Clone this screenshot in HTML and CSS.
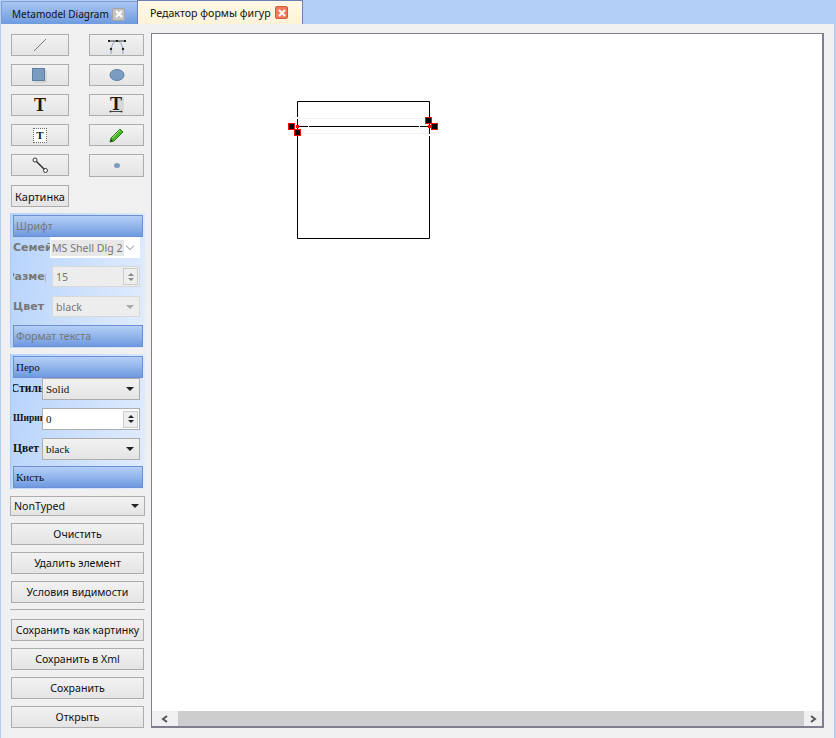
FILE: index.html

```html
<!DOCTYPE html>
<html lang="en">
<head>
    <meta charset="UTF-8">
    <title>Редактор формы фигур</title>
    <link rel="stylesheet" href="styles.css">
</head>
<body>
    <div class="tabbar">
        <div class="tab">
            <span class="tab-latin">Metamodel Diagram</span>
            <span class="tab-close">
                <svg width="8" height="8" viewBox="0 0 8 8"><path d="M1 1L7 7M7 1L1 7" stroke="#fff" stroke-width="2"/></svg>
            </span>
        </div>
        <div class="tab tab-active">
            <span>Редактор формы фигур</span>
            <span class="tab-close">
                <svg width="8" height="8" viewBox="0 0 8 8"><path d="M1 1L7 7M7 1L1 7" stroke="#fff" stroke-width="2"/></svg>
            </span>
        </div>
    </div>

    <div class="main">
        <div class="sidebar">
            <div class="tools">
                <button class="btn">
                    <svg width="16" height="16" viewBox="0 0 16 16"><path d="M2 14L14 2" stroke="#777" stroke-width="1"/></svg>
                </button>
                <button class="btn">
                    <svg width="20" height="18" viewBox="0 0 20 18"><path d="M4 18C4 8 7 5 10 5s6 3 6 13" fill="none" stroke="#8aa0b8"/><path d="M2 5H18" stroke="#333"/><rect x="1" y="4" width="2" height="2" fill="#222"/><rect x="9" y="4" width="2" height="2" fill="#222"/><rect x="17" y="4" width="2" height="2" fill="#222"/><circle cx="4" cy="13" r="1.2" fill="#222"/><circle cx="16" cy="13" r="1.2" fill="#222"/></svg>
                </button>
                <button class="btn">
                    <svg width="16" height="16" viewBox="0 0 16 16"><rect x="0.500" y="1.500" width="12" height="12" fill="#7a9cc0" stroke="#5f7f9f"/><path d="M14 3V15H2" fill="none" stroke="#c4c4c4"/></svg>
                </button>
                <button class="btn">
                    <svg width="16" height="14" viewBox="0 0 16 14"><ellipse cx="8" cy="7" rx="7" ry="5.500" fill="#7d9cc2" stroke="#60809f"/></svg>
                </button>
                <button class="btn">
                    <span class="glyph-t">T</span>
                </button>
                <button class="btn">
                    <svg width="16" height="18" viewBox="0 0 16 18"><rect x="8" y="1" width="7" height="13" fill="#d8d8d8"/><path d="M1 15.500H13" stroke="#444"/><circle cx="1.500" cy="15.500" r="1" fill="#333"/><circle cx="12.500" cy="15.500" r="1" fill="#333"/></svg>
                    <span class="glyph-t glyph-over">T</span>
                </button>
                <button class="btn">
                    <span class="text-box"><span class="glyph-small">T</span></span>
                </button>
                <button class="btn">
                    <svg width="16" height="16" viewBox="0 0 16 16"><path d="M1 15L2 11L11 2L14 5L5 14Z" fill="#4cb82c" stroke="#2a7a1a"/><path d="M1 15L2 12L4 14Z" fill="#333"/><path d="M3 11L11 3" stroke="#a5e58a"/></svg>
                </button>
                <button class="btn">
                    <svg width="16" height="16" viewBox="0 0 16 16"><path d="M3 3L13 13" stroke="#333" stroke-width="1.500"/><circle cx="3" cy="3" r="2" fill="#fff" stroke="#333"/><circle cx="13.500" cy="13.500" r="2" fill="#fff" stroke="#333"/></svg>
                </button>
                <button class="btn btn-tall">
                    <svg width="6" height="5" viewBox="0 0 6 5"><ellipse cx="3" cy="2.500" rx="3" ry="2.500" fill="#7d9cc2"/></svg>
                </button>
            </div>

            <button class="btn btn-picture">Картинка</button>

            <div class="group group-font">
                <div class="group-head">Шрифт</div>
                <div class="row row-first">
                    <span class="label">Семейство</span>
                    <div class="combo combo-white"><span class="combo-value">MS Shell Dlg 2</span><span class="chevron"></span></div>
                </div>
                <div class="row">
                    <span class="label label-center label-narrow">Размер</span>
                    <div class="spin spin-off"><span class="spin-value">15</span><span class="spin-arrows"><i class="up"></i><i class="down"></i></span></div>
                </div>
                <div class="row row-wide-gap">
                    <span class="label">Цвет</span>
                    <div class="combo"><span class="combo-value">black</span><span class="caret"></span></div>
                </div>
                <div class="group-head">Формат текста</div>
            </div>

            <div class="group group-pen">
                <div class="group-head">Перо</div>
                <div class="row row-first">
                    <span class="label label-center">Стиль</span>
                    <div class="combo"><span class="combo-value">Solid</span><span class="caret"></span></div>
                </div>
                <div class="row">
                    <span class="label label-small">Ширина</span>
                    <div class="spin"><span class="spin-value">0</span><span class="spin-arrows"><i class="up"></i><i class="down"></i></span></div>
                </div>
                <div class="row">
                    <span class="label">Цвет</span>
                    <div class="combo"><span class="combo-value">black</span><span class="caret"></span></div>
                </div>
                <div class="group-head">Кисть</div>
            </div>

            <div class="combo combo-type"><span class="combo-value">NonTyped</span><span class="caret"></span></div>

            <div class="actions">
                <button class="btn">Очистить</button>
                <button class="btn">Удалить элемент</button>
                <button class="btn">Условия видимости</button>
            </div>
            <div class="separator"></div>
            <div class="actions">
                <button class="btn">Сохранить как картинку</button>
                <button class="btn">Сохранить в Xml</button>
                <button class="btn">Сохранить</button>
                <button class="btn">Открыть</button>
            </div>
        </div>

        <div class="canvas">
            <div class="scene">
                <svg class="figure" width="160" height="150" viewBox="280 90 160 150">
                    <circle cx="297" cy="126" r="9" fill="none" stroke="#f2f2f2"/>
                    <circle cx="429" cy="126" r="9" fill="none" stroke="#f2f2f2"/>
                    <path d="M297 118.500H429M297 133.500H429" stroke="#f2f2f2"/>
                    <path d="M297.500 101.500H429.500V238.500H297.500Z" fill="none" stroke="#000"/>
                    <path d="M297 126.500H429" stroke="#000"/>
                    <path d="M297.500 117V119M429.500 117V119M297.500 134V136M429.500 134V136M308 126.500H309M419 126.500H420" stroke="#fff"/>
                    <rect x="296" y="125" width="3" height="3" fill="#f00"/>
                    <rect x="428" y="125" width="3" height="3" fill="#f00"/>
                    <g fill="#000" stroke="#f00">
                        <rect x="288.500" y="123.500" width="6" height="6"/>
                        <rect x="294.500" y="129.500" width="6" height="6"/>
                        <rect x="425.500" y="117.500" width="6" height="6"/>
                        <rect x="431.500" y="123.500" width="6" height="6"/>
                    </g>
                </svg>
            </div>
            <div class="scrollbar">
                <span class="scroll-arrow">
                    <svg width="8" height="8" viewBox="0 0 8 8"><path d="M6 1L2 4L6 7" fill="none" stroke="#555" stroke-width="2"/></svg>
                </span>
                <span class="scroll-thumb"></span>
                <span class="scroll-arrow scroll-arrow-right">
                    <svg width="8" height="8" viewBox="0 0 8 8"><path d="M2 1L6 4L2 7" fill="none" stroke="#555" stroke-width="2"/></svg>
                </span>
            </div>
        </div>
    </div>
</body>
</html>
```

FILE: styles.css

```css
* {
    box-sizing: border-box;
}
html, body {
    margin: 0;
    padding: 0;
    height: 738px;
    overflow: hidden;
}
body {
    width: 836px;
    background-color: #b4cff7;
    font-family: "Noto Sans", sans-serif;
    font-size: 10.6px;
    color: #111;
    display: flex;
    flex-direction: column;
}

/* tabs */
.tabbar {
    height: 24px;
    display: flex;
    align-items: flex-end;
    white-space: nowrap;
}
.tab {
    width: 136px;
    height: 23px;
    margin-left: 1px;
    padding: 2px 12px 0 10px;
    display: flex;
    align-items: center;
    justify-content: space-between;
    background: linear-gradient(#a9c6f2, #6e9be0);
    border-top: 1px solid #7f9bd0;
    border-left: 1px solid #7f9bd0;
    border-radius: 2px 0 0 0;
}
.tab-latin {
    font-size: 10px;
}
.tab-active {
    width: 166px;
    height: 24px;
    margin-left: 0;
    padding: 0 14px 0 12px;
    background: linear-gradient(#fff8e6, #fdf3d8);
    border: 1px solid #6c7fae;
    border-width: 1px 1px 0 1px;
    border-radius: 0;
}
.tab-close {
    width: 13px;
    height: 13px;
    display: flex;
    align-items: center;
    justify-content: center;
    background-color: #c4c4c4;
    border: 1px solid #a5a5a5;
    border-radius: 2px;
}
.tab-active .tab-close {
    background-color: #f07c5c;
    border-color: #d4573a;
}

/* main area */
.main {
    flex: 1;
    margin: 0 2px 0 1px;
    padding: 9px 10px 10px 9px;
    display: flex;
    gap: 7px;
    background-color: #f0f0f0;
    overflow: hidden;
}
.sidebar {
    width: 134px;
    flex: none;
    padding-top: 1px;
    display: flex;
    flex-direction: column;
}
.btn {
    height: 22px;
    padding: 0;
    display: flex;
    align-items: center;
    justify-content: center;
    position: relative;
    font-family: inherit;
    font-size: inherit;
    color: #111;
    white-space: nowrap;
    background: linear-gradient(#f2f2f2, #e4e4e4);
    border: 1px solid #adadad;
}
.tools {
    margin-left: 1px;
    display: grid;
    grid-template-columns: 58px 55px;
    column-gap: 20px;
    row-gap: 8px;
}
.btn-tall {
    height: 23px;
}
.btn-picture {
    width: 58px;
    margin: 8px 0 0 1px;
    font-size: 11px;
}
.glyph-t {
    font-family: "Liberation Serif", serif;
    font-weight: bold;
    font-size: 18px;
    line-height: 1;
    color: #1a1a10;
}
.glyph-over {
    position: absolute;
    left: 20px;
    top: 0;
}
.text-box {
    width: 14px;
    height: 15px;
    display: flex;
    align-items: center;
    justify-content: center;
    background-color: #fff;
    border: 1px dotted #666;
}
.glyph-small {
    font-family: "Liberation Serif", serif;
    font-weight: bold;
    font-size: 11px;
}

/* grouped panels */
.group {
    width: 135px;
    margin-top: 6px;
    padding: 2px 2px 1px;
    display: flex;
    flex-direction: column;
    background: linear-gradient(100deg, #b6d3fb, #e2edfd);
    border-left: 1px solid #a9c9f7;
}
.group-font {
    color: #777;
}
.group-pen {
    font-family: "Liberation Serif", serif;
    font-size: 11px;
}
.group-head {
    height: 22px;
    padding-left: 2px;
    display: flex;
    align-items: center;
    background: linear-gradient(#b5d0f6, #6f9ae0);
    border: 1px solid #6d8fd8;
}
.row {
    height: 21px;
    margin-top: 8px;
    display: flex;
    align-items: center;
    justify-content: flex-end;
    padding-right: 3px;
}
.group-pen .row {
    height: 22px;
}
.row-first {
    margin-top: 0;
}
.row-wide-gap {
    margin-top: 9px;
}
.row + .group-head {
    margin-top: 8px;
}
.group-pen .row + .group-head {
    margin-top: 6px;
}
.label {
    flex: 1;
    min-width: 0;
    display: flex;
    font-weight: bold;
    overflow: hidden;
    white-space: nowrap;
}
.group-font .label {
    font-family: "DejaVu Sans", sans-serif;
    font-size: 11px;
}
.group-pen .label {
    font-size: 11.5px;
    margin-top: -2px;
}
.group-pen .label-small {
    font-size: 9.5px;
}
.label-center {
    justify-content: center;
}
.label-narrow {
    margin-right: 6px;
}
.group-font .row .combo,
.group-font .row .spin {
    width: 88px;
    flex: none;
}
.group-font .row-first .combo {
    width: 90px;
}
.group-pen .row .combo,
.group-pen .row .spin {
    width: 98px;
    height: 22px;
    flex: none;
}
.combo, .spin {
    height: 21px;
    padding-left: 2px;
    display: flex;
    align-items: center;
    justify-content: space-between;
    background: linear-gradient(#f2f2f2, #e4e4e4);
    border: 1px solid #adadad;
}
.group-font .combo, .group-font .spin {
    background: #ededed;
    border-color: #d8d8d8;
}
.group-font .combo-white {
    background: #fff;
    border-color: #fff;
    padding-left: 0;
}
.combo-white .combo-value {
    background-color: #e8e8e8;
    padding: 1px;
    height: 16px;
    line-height: 14px;
}
.combo-value, .spin-value {
    padding-left: 1px;
}
.spin {
    background: #fff;
}
.group-font .spin-value,
.group-font .combo-value {
    color: #777;
}
.caret {
    margin-right: 5px;
    border-left: 4px solid transparent;
    border-right: 4px solid transparent;
    border-top: 4px solid #222;
}
.group-font .caret {
    border-top-color: #aaa;
}
.chevron {
    width: 6px;
    height: 6px;
    margin: 0 6px 3px 0;
    border-right: 1px solid #aaa;
    border-bottom: 1px solid #aaa;
    transform: rotate(45deg);
}
.spin-arrows {
    width: 15px;
    height: 17px;
    margin-right: 1px;
    display: flex;
    flex-direction: column;
    align-items: center;
    justify-content: center;
    gap: 2px;
    background-color: #eee;
    border: 1px solid #ccc;
}
.spin-arrows i {
    border-left: 3px solid transparent;
    border-right: 3px solid transparent;
}
.spin-arrows .up {
    border-bottom: 3px solid #222;
}
.spin-arrows .down {
    border-top: 3px solid #222;
}
.spin-off .spin-arrows i {
    border-top-color: #888;
    border-bottom-color: #888;
}
.combo-type {
    width: 135px;
    height: 20px;
    margin-top: 7px;
    padding-left: 2px;
}
.actions {
    margin-left: 1px;
    width: 133px;
    display: flex;
    flex-direction: column;
    gap: 7px;
}
.combo-type + .actions {
    margin-top: 7px;
}
.separator {
    width: 135px;
    height: 1px;
    margin: 6px 0 9px;
    background-color: #adadad;
}

/* canvas */
.canvas {
    width: 673px;
    flex: none;
    display: flex;
    flex-direction: column;
    background-color: #fff;
    border: 1px solid #7f7f8f;
    border-width: 1px 2px 2px 1px;
}
.scene {
    flex: 1;
    position: relative;
}
.figure {
    position: absolute;
    left: 128px;
    top: 56px;
}
.scrollbar {
    height: 15px;
    display: flex;
    background-color: #f0f0f0;
}
.scroll-arrow {
    width: 26px;
    display: flex;
    align-items: center;
    justify-content: center;
}
.scroll-arrow-right {
    width: 18px;
}
.scroll-thumb {
    flex: 1;
    background-color: #cdcdcd;
}
```
